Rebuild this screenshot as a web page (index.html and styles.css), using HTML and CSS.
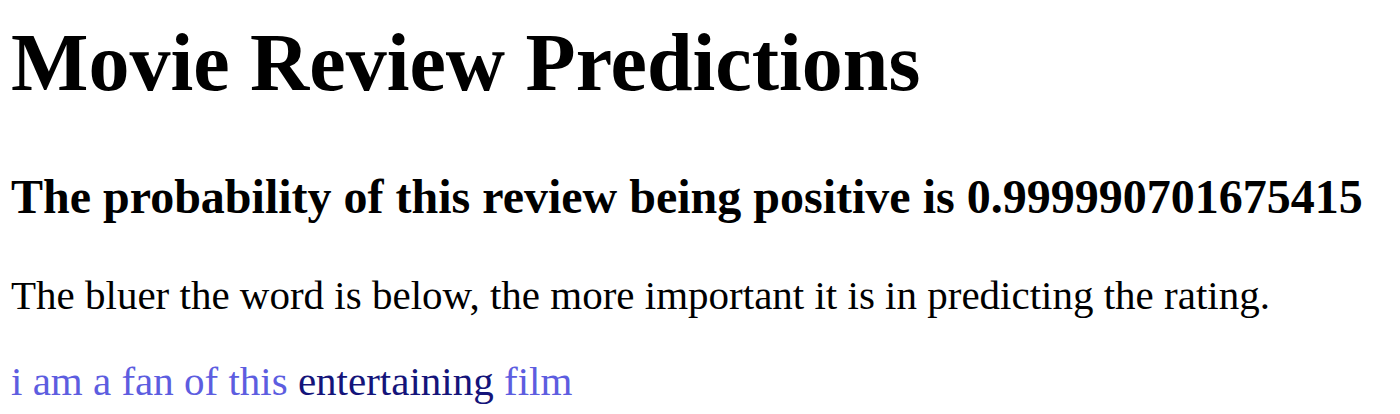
FILE: index.html
```html
<!DOCTYPE html>
<html>
<head>
<meta charset="utf-8">
<link rel="stylesheet" href="styles.css">
</head>
<body>
<h1 class="title">Movie Review Predictions</h1>
<h3 class="prob">The probability of this review being positive is 0.999990701675415</h3>
<p class="note">The bluer the word is below, the more important it is in predicting the rating.</p>
<p class="review"><span class="w-light">i am a fan of this</span> <span class="w-dark">entertaining</span> <span class="w-light">film</span></p>
</body>
</html>
```
FILE: styles.css
```css
html, body {
  margin: 0;
  padding: 0;
  background: #ffffff;
}
body {
  padding: 0 11px;
  font-family: "Liberation Serif", "Times New Roman", serif;
  color: #000;
}
.title {
  font-size: 82px;
  font-weight: bold;
  line-height: 94px;
  margin: 16px 0 59px 0;
  white-space: nowrap;
}
.prob {
  font-size: 48px;
  font-weight: bold;
  line-height: 55px;
  margin: 0 0 48px 0;
  white-space: nowrap;
}
.note {
  font-size: 41px;
  line-height: 47px;
  margin: 0 0 39px 0;
  white-space: nowrap;
}
.review {
  font-size: 41px;
  line-height: 47px;
  margin: 0;
  white-space: nowrap;
}
.w-light { color: #5d5de0; }
.w-dark { color: #14147a; }
```
